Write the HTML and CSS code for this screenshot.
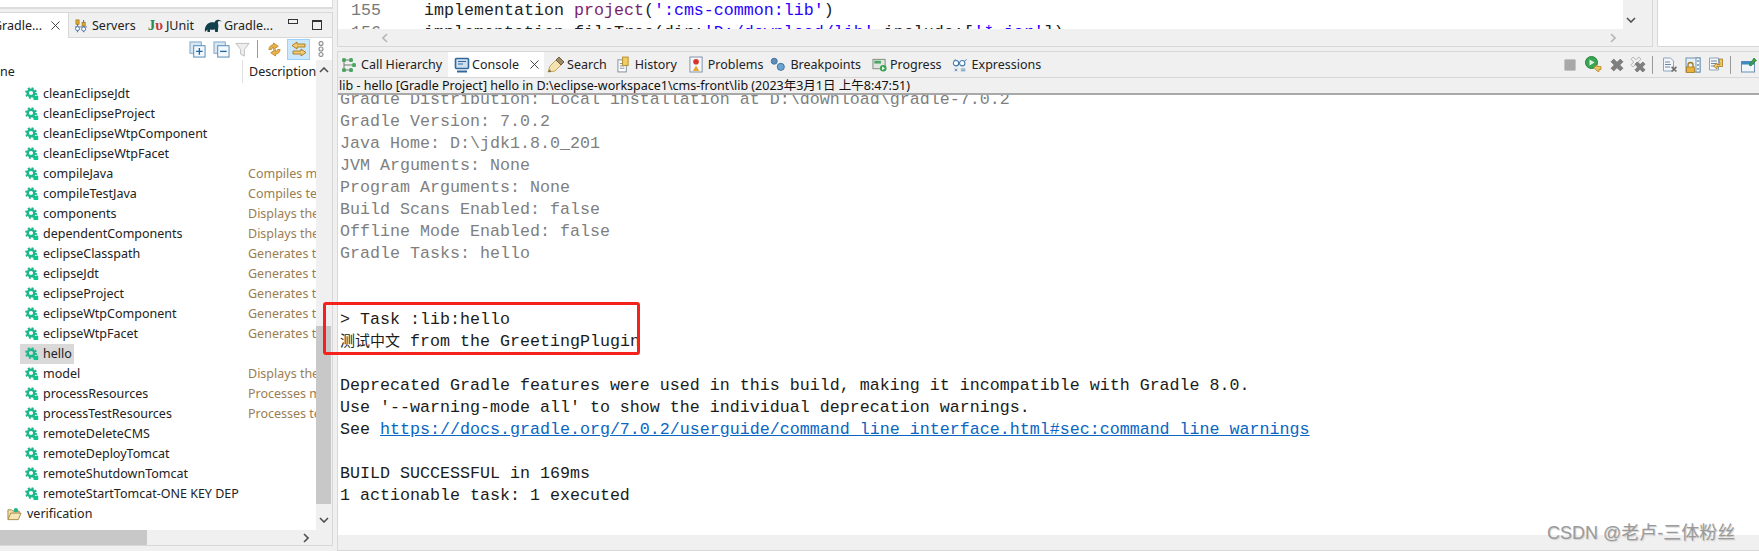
FILE: index.html
```html
<!DOCTYPE html>
<html lang="zh">
<head>
<meta charset="utf-8">
<title>Eclipse</title>
<link rel="stylesheet" href="styles.css">
</head>
<body>
<svg class="defs" width="0" height="0" aria-hidden="true">
  <defs>
    <symbol id="gear" viewBox="0 0 14 14">
      <circle cx="6" cy="6" r="5" fill="none" stroke="#1fb58b" stroke-width="1.8" stroke-dasharray="2 1.93"/>
      <circle cx="6" cy="6" r="3.3" fill="none" stroke="#1fb58b" stroke-width="2.4"/>
      <rect x="8.6" y="9" width="4.6" height="4" fill="#0fc48a"/>
      <path d="M9.6 9V8.2a1.2 1.2 0 0 1 2.4 0V9" fill="none" stroke="#0fc48a" stroke-width=".8"/>
    </symbol>
    <symbol id="i-close" viewBox="0 0 10 10">
      <path d="M.5.5l9 9M9.500.5l-9 9" fill="none" stroke="#333" stroke-width="1"/>
    </symbol>
    <symbol id="i-servers" viewBox="0 0 16 16">
      <path d="M4 1v14M11 1v14" stroke="#59708c" stroke-width="1.2"/>
      <path d="M1 9h14" stroke="#7a8ba0" stroke-width="1.2"/>
      <rect x="2.2" y="1" width="3.6" height="5" fill="#e4a82e" stroke="#8a6a20" stroke-width=".7"/>
      <rect x="9.2" y="4" width="3.6" height="4" fill="#e4a82e" stroke="#8a6a20" stroke-width=".7"/>
      <circle cx="4" cy="11" r="2.3" fill="#fff" stroke="#3d6aa5" stroke-width="1"/>
      <circle cx="11" cy="11.5" r="2.3" fill="#fff" stroke="#3d6aa5" stroke-width="1"/>
    </symbol>
    <symbol id="i-elephant" viewBox="0 0 18 14">
      <path d="M1 13c-.6-3 .2-6 2.4-8C5.400 3.200 8 2.800 10.400 3.500c.6-1.500 2-2.700 3.600-2.800 1.800-.1 3.200 1 3.800 2.300-.8-.7-1.900-1.200-3-.8-.9.300-1.100 1.100-.8 2 .5 1.600.5 3.200.2 4.800l-.4 4h-2.600l-.4-2.800c-1.600.8-3.300.8-4.800.2L6 13H3.500l-.2-2.600C2.600 11.200 2 12.200 1 13z" fill="#123f4c"/>
    </symbol>
    <symbol id="i-expand" viewBox="0 0 18 18">
      <rect x="1" y="1" width="12" height="12" fill="#d7e6f3" stroke="#7ea4c6"/>
      <rect x="5" y="5" width="12" height="12" fill="#f3f8fc" stroke="#4d87b5"/>
      <path d="M11 7.500v7M7.500 11h7" stroke="#22689f" stroke-width="1.400"/>
    </symbol>
    <symbol id="i-collapse" viewBox="0 0 18 18">
      <rect x="1" y="1" width="12" height="12" fill="#d7e6f3" stroke="#7ea4c6"/>
      <rect x="5" y="5" width="12" height="12" fill="#f3f8fc" stroke="#4d87b5"/>
      <path d="M7.500 11h7" stroke="#22689f" stroke-width="1.400"/>
    </symbol>
    <symbol id="i-filter" viewBox="0 0 16 16">
      <path d="M1 1.500h14L10 8v7l-4-2V8z" fill="#eeeeee" stroke="#bdbdbd"/>
    </symbol>
    <symbol id="i-refresh" viewBox="0 0 16 16">
      <path d="M2 8c.2-3 2.400-5 5-5V1l5 3.500L7 8V6c-1.300 0-2 .8-2.300 2z" fill="#e9b44c" stroke="#b27a1c" stroke-width=".8"/>
      <path d="M14 8c-.2 3-2.400 5-5 5v2L4 11.500 9 8v2c1.300 0 2-.8 2.300-2z" fill="#e9b44c" stroke="#b27a1c" stroke-width=".8"/>
    </symbol>
    <symbol id="i-link" viewBox="0 0 16 16">
      <path d="M6 1 1 4.500 6 8V6h8V3H6z" fill="#f0cb72" stroke="#a9761a" stroke-width=".9"/>
      <path d="M10 8l5 3.500-5 3.500v-2H2v-3h8z" fill="#f0cb72" stroke="#a9761a" stroke-width=".9"/>
    </symbol>
    <symbol id="i-dots" viewBox="0 0 8 16">
      <g fill="#f5f5f5" stroke="#8d8d8d" stroke-width="1.100"><circle cx="4" cy="2.500" r="2"/><circle cx="4" cy="8" r="2"/><circle cx="4" cy="13.500" r="2"/></g>
    </symbol>
    <symbol id="i-call" viewBox="0 0 16 16">
      <path d="M3 3v10M3 3h5M3 8h8M3 13h5" fill="none" stroke="#6d7f6d" stroke-width="1"/>
      <g fill="#4ca663"><rect x="1" y="1" width="4" height="4" rx="1.500"/><rect x="1" y="11" width="4" height="4" rx="1.500"/><rect x="8" y="1" width="4" height="4" rx="1.500"/><rect x="8" y="11" width="4" height="4" rx="1.500"/><rect x="11" y="6" width="4" height="4" rx="1.500"/></g>
    </symbol>
    <symbol id="i-console" viewBox="0 0 16 16">
      <rect x="1.500" y="1.500" width="13" height="10" rx="1" fill="#cfe0ef" stroke="#33689c" stroke-width="1.600"/>
      <path d="M4 4.500h8M4 7h5" stroke="#33689c"/>
      <path d="M3 14.500h10" stroke="#33689c" stroke-width="2"/>
    </symbol>
    <symbol id="i-search" viewBox="0 0 18 18">
      <path d="M1 16l2-6 6-6 5 5-6 6z" fill="#f4e3b0" stroke="#c9a657"/>
      <path d="M9 4l3-3 5 5-3 3z" fill="#9b8a6a" stroke="#6d5c3e"/>
      <path d="M1 16l2-3 1 3z" fill="#7a6a4a"/>
    </symbol>
    <symbol id="i-history" viewBox="0 0 14 18">
      <rect x="1" y="4" width="9" height="13" fill="#fff" stroke="#7b8a9a"/>
      <path d="M3 8h5M3 10.500h5M3 13h5" stroke="#7b8a9a"/>
      <rect x="6" y="1" width="6" height="9" fill="#f1cd63" stroke="#b18c2a"/>
    </symbol>
    <symbol id="i-problems" viewBox="0 0 16 18">
      <rect x="1" y="1" width="13" height="16" fill="#f5f8fb" stroke="#7d8fa5"/>
      <circle cx="7.500" cy="6" r="3" fill="#d9342b"/>
      <path d="M7.500 10l3.500 6H4z" fill="#e9a92e"/>
    </symbol>
    <symbol id="i-breakpoints" viewBox="0 0 16 16">
      <circle cx="4.500" cy="4.500" r="3.200" fill="#5b8fb9" stroke="#3f6f97"/>
      <circle cx="11.500" cy="10.500" r="3.800" fill="#6ba3d0" stroke="#3f6f97"/>
    </symbol>
    <symbol id="i-progress" viewBox="0 0 16 16">
      <rect x="1" y="2.500" width="13" height="10" fill="#dfe6df" stroke="#7c8a7c"/>
      <rect x="2.500" y="4" width="7" height="3" fill="#4ca663"/>
      <circle cx="12" cy="12" r="3.500" fill="#39a24f"/>
      <path d="M10.800 10v4l3-2z" fill="#fff"/>
    </symbol>
    <symbol id="i-expr" viewBox="0 0 18 16">
      <circle cx="4.500" cy="6" r="3" fill="#fff" stroke="#3f79ad" stroke-width="1.200"/>
      <circle cx="11.500" cy="6" r="3" fill="#fff" stroke="#3f79ad" stroke-width="1.200"/>
      <path d="M7.500 5.500h1M14 4l2.500-2.500M2 3.500 4 1.500" fill="none" stroke="#3f79ad"/>
      <path d="M3 12l3 3M6 12l-3 3M10 12.500h5M10 14.500h5" stroke="#3f79ad" stroke-width=".9"/>
    </symbol>
    <symbol id="i-stop" viewBox="0 0 12 12">
      <rect x=".5" y=".5" width="11" height="11" rx="1" fill="#a8a8a8" stroke="#c4c4c4"/>
    </symbol>
    <symbol id="i-run" viewBox="0 0 17 17">
      <circle cx="6.500" cy="6.500" r="6" fill="#3aa552" stroke="#23833a"/>
      <path d="M4.500 3.500v6l5-3z" fill="#e6f4e8"/>
      <path d="M9 11.500l3-2.500v1.500h4v3h-2v2l-2-.5z" fill="#edc56a" stroke="#b5841f" stroke-width=".8"/>
    </symbol>
    <symbol id="i-x" viewBox="1 1 12 12">
      <path d="M2 4.200 4.200 2 7 4.800 9.800 2 12 4.200 9.200 7 12 9.800 9.800 12 7 9.200 4.200 12 2 9.800 4.800 7z" fill="#7f7f7f" stroke="#6e6e6e" stroke-width=".8"/>
    </symbol>
    <symbol id="i-xx" viewBox="0 0 17 17">
      <path d="M1 3.200 3.200 1 6 3.800 8.800 1 11 3.200 8.200 6 11 8.800 8.800 11 6 8.200 3.200 11 1 8.800 3.800 6z" fill="#f0f0f0" stroke="#a3a3a3" stroke-width=".8"/>
      <path d="M5 8.200 7.200 6 10 8.800 12.800 6 15 8.200 12.200 11 15 13.800 12.800 16 10 13.200 7.200 16 5 13.800 7.800 11z" fill="#7f7f7f" stroke="#6e6e6e" stroke-width=".8"/>
    </symbol>
    <symbol id="i-docx" viewBox="0 0 16 16">
      <path d="M1.500 1h7l3 3v10h-10z" fill="#f3f7fb" stroke="#8ea4bb"/>
      <path d="M3 5h5M3 7.500h6M3 10h5" stroke="#6f88a3"/>
      <path d="M9 10.500 10.200 9.300 12 11l1.800-1.700 1.200 1.200-1.800 1.700 1.800 1.700L13.800 15 12 13.300 10.200 15 9 13.900l1.800-1.700z" fill="#6f6f6f"/>
    </symbol>
    <symbol id="i-lock" viewBox="0 0 16 16">
      <rect x="1" y="1" width="14" height="14" fill="#e5f1fa" stroke="#6e8fb0"/>
      <rect x="11" y="1" width="4" height="14" fill="#fff" stroke="#6e8fb0"/>
      <path d="M12.200 4h1.600M12.200 8h1.600M12.200 12h1.600" stroke="#3f79ad" stroke-width="1.500"/>
      <path d="M3 10V8a2.500 2.500 0 0 1 5 0v2" fill="none" stroke="#a07a20" stroke-width="1.300"/>
      <rect x="1.500" y="10" width="8" height="5.500" fill="#e9b03a" stroke="#9c751c" stroke-width=".7"/>
    </symbol>
    <symbol id="i-docarrow" viewBox="0 0 16 16">
      <path d="M1.500 1h9v12h-9z" fill="#f3f7fb" stroke="#8ea4bb"/>
      <path d="M3 4h6M3 6.500h5M3 9h4" stroke="#6f88a3"/>
      <path d="M11 2h3.500v7.500H9V12L5.500 9 9 6v1.500h3z" fill="#f0c96a" stroke="#a9761a" stroke-width=".8"/>
    </symbol>
    <symbol id="i-pin" viewBox="0 0 16 16">
      <rect x=".5" y="4.500" width="13" height="10.500" fill="#f1f6fb" stroke="#6b8fb3"/>
      <rect x=".5" y="4.500" width="13" height="3" fill="#3d8ac4"/>
      <path d="M8 8l3-4 2-3 2.500 2.500-2.500 2L10 9z" fill="#3fa34d" stroke="#24763a" stroke-width=".7"/>
    </symbol>
    <symbol id="i-folder" viewBox="0 0 16 14">
      <path d="M1 12.500V2.500h4l1.500 1.500H13v2" fill="#f3dfa8" stroke="#a88845"/>
      <path d="M1 13l3-7h11l-3 7z" fill="#f6e6b8" stroke="#a88845"/>
      <circle cx="9.500" cy="3" r="2.300" fill="#1fb58b"/>
    </symbol>
  </defs>
</svg>

<div class="app">
  <aside class="left">
    <div class="stub"></div>
    <section class="gradle">
      <div class="vtabs">
        <div class="vtab vtab-on"><span class="clip-g">Gradle...</span><svg class="close"><use href="#i-close"/></svg></div>
        <div class="vtab vt-servers"><svg class="ic14"><use href="#i-servers"/></svg>Servers</div>
        <div class="vtab vt-junit"><span class="ju"><b class="j">J</b><b class="u">υ</b></span>JUnit</div>
        <div class="vtab vt-gradle"><svg class="ic-el"><use href="#i-elephant"/></svg>Gradle...</div>
        <div class="winctl"><span class="min"></span><span class="max"></span></div>
      </div>
      <div class="vtools">
        <svg class="ic17"><use href="#i-expand"/></svg>
        <svg class="ic17 t-c"><use href="#i-collapse"/></svg>
        <svg class="ic15 t-f"><use href="#i-filter"/></svg>
        <span class="sep t-s"></span>
        <svg class="ic15 t-r"><use href="#i-refresh"/></svg>
        <span class="hl"><svg class="ic16"><use href="#i-link"/></svg></span>
        <svg class="ic-dots"><use href="#i-dots"/></svg>
      </div>
      <div class="body">
        <div class="tree-wrap">
          <div class="thead"><span class="th-name">ne</span><span class="th-desc">Description</span></div>
          <div class="tree">
            <div class="row"><span class="nm"><svg class="gear"><use href="#gear"/></svg>cleanEclipseJdt</span></div>
            <div class="row"><span class="nm"><svg class="gear"><use href="#gear"/></svg>cleanEclipseProject</span></div>
            <div class="row"><span class="nm"><svg class="gear"><use href="#gear"/></svg>cleanEclipseWtpComponent</span></div>
            <div class="row"><span class="nm"><svg class="gear"><use href="#gear"/></svg>cleanEclipseWtpFacet</span></div>
            <div class="row"><span class="nm"><svg class="gear"><use href="#gear"/></svg>compileJava</span><span class="ds">Compiles main Java source.</span></div>
            <div class="row"><span class="nm"><svg class="gear"><use href="#gear"/></svg>compileTestJava</span><span class="ds">Compiles test Java source.</span></div>
            <div class="row"><span class="nm"><svg class="gear"><use href="#gear"/></svg>components</span><span class="ds">Displays the components produced</span></div>
            <div class="row"><span class="nm"><svg class="gear"><use href="#gear"/></svg>dependentComponents</span><span class="ds">Displays the dependent components</span></div>
            <div class="row"><span class="nm"><svg class="gear"><use href="#gear"/></svg>eclipseClasspath</span><span class="ds">Generates the Eclipse classpath file.</span></div>
            <div class="row"><span class="nm"><svg class="gear"><use href="#gear"/></svg>eclipseJdt</span><span class="ds">Generates the Eclipse JDT settings.</span></div>
            <div class="row"><span class="nm"><svg class="gear"><use href="#gear"/></svg>eclipseProject</span><span class="ds">Generates the Eclipse project file.</span></div>
            <div class="row"><span class="nm"><svg class="gear"><use href="#gear"/></svg>eclipseWtpComponent</span><span class="ds">Generates the Eclipse WTP component.</span></div>
            <div class="row"><span class="nm"><svg class="gear"><use href="#gear"/></svg>eclipseWtpFacet</span><span class="ds">Generates the Eclipse WTP facet.</span></div>
            <div class="row"><span class="nm sel"><svg class="gear"><use href="#gear"/></svg>hello</span></div>
            <div class="row"><span class="nm"><svg class="gear"><use href="#gear"/></svg>model</span><span class="ds">Displays the configuration model</span></div>
            <div class="row"><span class="nm"><svg class="gear"><use href="#gear"/></svg>processResources</span><span class="ds">Processes main resources.</span></div>
            <div class="row"><span class="nm"><svg class="gear"><use href="#gear"/></svg>processTestResources</span><span class="ds">Processes test resources.</span></div>
            <div class="row"><span class="nm"><svg class="gear"><use href="#gear"/></svg>remoteDeleteCMS</span></div>
            <div class="row"><span class="nm"><svg class="gear"><use href="#gear"/></svg>remoteDeployTomcat</span></div>
            <div class="row"><span class="nm"><svg class="gear"><use href="#gear"/></svg>remoteShutdownTomcat</span></div>
            <div class="row"><span class="nm"><svg class="gear"><use href="#gear"/></svg>remoteStartTomcat-ONE KEY DEP</span></div>
            <div class="row"><span class="nm nm-top"><svg class="folder"><use href="#i-folder"/></svg>verification</span></div>
          </div>
        </div>
        <div class="vscroll">
          <svg class="chev" viewBox="0 0 10 6"><path d="M1 5l4-4 4 4" fill="none" stroke="#505050" stroke-width="1.600"/></svg>
          <div class="vtrack"><div class="vthumb"></div></div>
          <svg class="chev" viewBox="0 0 10 6"><path d="M1 1l4 4 4-4" fill="none" stroke="#505050" stroke-width="1.600"/></svg>
        </div>
      </div>
      <div class="hscroll">
        <div class="hthumb"></div>
        <svg class="chev-r" viewBox="0 0 6 10"><path d="M1 1l4 4-4 4" fill="none" stroke="#505050" stroke-width="1.600"/></svg>
      </div>
    </section>
  </aside>

  <main class="right">
    <div class="upper">
      <section class="editor">
        <div class="code-row">
          <div class="ruler"><div>155</div><div>156</div></div>
          <pre class="code">    implementation <span class="kw">project</span>(<span class="str">':cms-common:lib'</span>)
    implementation fileTree(dir:<span class="str">'D:/download/lib'</span>,include:[<span class="str">'*.jar'</span>])</pre>
          <div class="ed-v"><svg class="chev" viewBox="0 0 10 6"><path d="M1 1l4 4 4-4" fill="none" stroke="#505050" stroke-width="1.600"/></svg></div>
        </div>
        <div class="ed-h">
          <svg class="chev-r flip" viewBox="0 0 6 10"><path d="M1 1l4 4-4 4" fill="none" stroke="#b5b5b5" stroke-width="1.600"/></svg>
          <svg class="chev-r" viewBox="0 0 6 10"><path d="M1 1l4 4-4 4" fill="none" stroke="#b5b5b5" stroke-width="1.600"/></svg>
        </div>
      </section>
      <section class="outline"></section>
    </div>

    <section class="consolepane">
      <div class="ctabs">
        <div class="ctab t-call"><svg class="ic16"><use href="#i-call"/></svg>Call Hierarchy</div>
        <div class="ctab ctab-on"><svg class="ic16"><use href="#i-console"/></svg>Console<svg class="close close-c"><use href="#i-close"/></svg></div>
        <div class="ctab t-search"><svg class="ic18"><use href="#i-search"/></svg>Search</div>
        <div class="ctab t-hist"><svg class="ic-h"><use href="#i-history"/></svg>History</div>
        <div class="ctab t-prob"><svg class="ic-p"><use href="#i-problems"/></svg>Problems</div>
        <div class="ctab t-bp"><svg class="ic15"><use href="#i-breakpoints"/></svg>Breakpoints</div>
        <div class="ctab t-prog"><svg class="ic15"><use href="#i-progress"/></svg>Progress</div>
        <div class="ctab t-exp"><svg class="ic16"><use href="#i-expr"/></svg>Expressions</div>
        <div class="ctools">
          <svg class="ic12"><use href="#i-stop"/></svg>
          <svg class="ic17 m-run"><use href="#i-run"/></svg>
          <svg class="ic14 m-x"><use href="#i-x"/></svg>
          <svg class="ic17 m-xx"><use href="#i-xx"/></svg>
          <span class="sep m-s1"></span>
          <svg class="ic16 m-doc"><use href="#i-docx"/></svg>
          <svg class="ic16 m-lock"><use href="#i-lock"/></svg>
          <svg class="ic16 m-lock"><use href="#i-docarrow"/></svg>
          <span class="sep m-s2"></span>
          <svg class="ic16 m-pin"><use href="#i-pin"/></svg>
        </div>
      </div>
      <div class="cstatus">lib - hello [Gradle Project] hello in D:\eclipse-workspace1\cms-front\lib (2023年3月1日 上午8:47:51)</div>
      <div class="coutput">
<pre class="out"><span class="gray">Gradle Distribution: Local installation at D:\download\gradle-7.0.2
Gradle Version: 7.0.2
Java Home: D:\jdk1.8.0_201
JVM Arguments: None
Program Arguments: None
Build Scans Enabled: false
Offline Mode Enabled: false
Gradle Tasks: hello</span>


&gt; Task :lib:hello
<span class="cjk">测试中文</span> from the GreetingPlugin

Deprecated Gradle features were used in this build, making it incompatible with Gradle 8.0.
Use '--warning-mode all' to show the individual deprecation warnings.
See <a class="lnk">https://docs.gradle.org/7.0.2/userguide/command_line_interface.html#sec:command_line_warnings</a>

BUILD SUCCESSFUL in 169ms
1 actionable task: 1 executed</pre>
      </div>
      <div class="cbottom"></div>
    </section>
  </main>

  <div class="redbox"></div>
  <div class="mark">CSDN @老卢-三体粉丝</div>
</div>
</body>
</html>
```
FILE: styles.css
```css
* { box-sizing: border-box; }
html, body { margin: 0; padding: 0; background: #f0f0f0; }
.defs { position: absolute; }
svg { display: block; flex: none; }

.app {
  position: relative;
  width: 1759px;
  height: 551px;
  display: flex;
  overflow: hidden;
  background: #f0f0f0;
  font-family: "Noto Sans", "Noto Sans CJK SC", sans-serif;
  font-size: 12.5px;
  color: #222;
}

/* left column */
.left { width: 333px; flex: none; display: flex; flex-direction: column; }
.stub { height: 9px; background: #fff; border-bottom: 2px solid #dcdcdc; border-right: 1px solid #dcdcdc; }
.gradle {
  margin-top: 3px;
  height: 534px;
  display: flex;
  flex-direction: column;
  border-top: 1px solid #d8d8d8;
  border-right: 1px solid #d8d8d8;
  border-bottom: 1px solid #d8d8d8;
}
.vtabs { height: 25px; flex: none; display: flex; align-items: center; border-bottom: 1px solid #d8d8d8; }
.vtab { display: flex; align-items: center; height: 100%; gap: 4px; white-space: nowrap; padding-top: 1px; }
.vtab-on {
  width: 69px;
  height: 25px;
  background: #fff;
  border-right: 1px solid #d8d8d8;
  overflow: hidden;
  justify-content: flex-end;
  padding-right: 8px;
  gap: 9px;
}
.clip-g { flex: none; }
.close { width: 9px; height: 9px; }
.vt-servers { margin-left: 5px; }
.vt-junit { margin-left: 12px; gap: 3px; }
.vt-gradle { margin-left: 10px; gap: 2px; }
.ju { font: bold 15px/1 "Liberation Serif", serif; display: flex; }
.j { color: #2a8a55; }
.u { color: #c33a3a; }
.ic-el { width: 18px; height: 14px; }
.winctl { margin-left: auto; display: flex; align-items: center; gap: 14px; padding-right: 10px; }
.min { width: 10px; height: 5px; border: 1px solid #333; margin-top: -7px; }
.max { width: 10px; height: 10px; border: 1px solid #333; border-top-width: 2px; }

.vtools {
  height: 22px;
  flex: none;
  background: #fff;
  display: flex;
  align-items: center;
  padding-left: 189px;
}
.ic12 { width: 12px; height: 12px; }
.ic14 { width: 14px; height: 14px; }
.ic15 { width: 15px; height: 15px; }
.ic16 { width: 16px; height: 16px; }
.ic17 { width: 17px; height: 17px; }
.ic18 { width: 18px; height: 18px; }
.ic-h { width: 13px; height: 17px; }
.ic-p { width: 15px; height: 17px; }
.ic-dots { width: 8px; height: 16px; margin-left: 7px; }
.t-c { margin-left: 7px; }
.t-f { margin-left: 5px; }
.t-s { margin-left: 7px; }
.t-r { margin-left: 9px; }
.sep { width: 1px; height: 18px; background: #9a9a9a; flex: none; }
.hl {
  width: 23px;
  height: 21px;
  margin-left: 5px;
  background: #cce8ff;
  border: 1px solid #99d1ff;
  display: flex;
  align-items: center;
  justify-content: center;
}

.body { flex: 1; min-height: 0; display: flex; background: #fff; }
.tree-wrap { width: 316px; flex: none; overflow: hidden; }
.thead { height: 24px; display: flex; align-items: center; padding-bottom: 1px; }
.th-name { width: 242px; flex: none; }
.th-desc { border-left: 1px solid #e0e0e0; height: 100%; padding-left: 6px; display: flex; align-items: center; }
.row { height: 20px; white-space: nowrap; display: grid; grid-template-columns: 248px 1fr; justify-items: start; align-items: center; }
.nm {
  height: 20px;
  margin-left: 20px;
  padding: 0 2px 1px 5px;
  display: flex;
  align-items: center;
  gap: 5px;
}
.ds { color: #9a7d52; overflow: hidden; padding-bottom: 1px; }
.nm-top { margin-left: 7px; padding: 0 0 1px; gap: 5px; }
.sel { background: #d9d9d9; }
.gear { width: 14px; height: 14px; margin-right: -1px; }
.folder { width: 15px; height: 14px; }

.vscroll { width: 16px; flex: none; background: #f0f0f0; display: flex; flex-direction: column; align-items: center; padding-top: 7px; padding-bottom: 7px; }
.chev { width: 10px; height: 6px; flex: none; }
.vtrack { flex: 1; width: 100%; padding-top: 253px; padding-bottom: 13px; display: flex; }
.vthumb { flex: 1; background: #c8c8c8; margin-right: 1px; }
.hscroll { height: 15px; flex: none; display: flex; align-items: center; background: #f0f0f0; padding-right: 23px; justify-content: space-between; }
.hthumb { width: 147px; height: 15px; background: #c8c8c8; }
.chev-r { width: 6px; height: 10px; flex: none; }
.flip { transform: scaleX(-1); }

/* right column */
.right { flex: 1; min-width: 0; margin-left: 4px; display: flex; flex-direction: column; }
.upper { height: 47px; flex: none; display: flex; }
.editor { width: 1316px; flex: none; display: flex; flex-direction: column; border-left: 1px solid #d8d8d8; border-right: 1px solid #d8d8d8; border-bottom: 1px solid #d8d8d8; }
.code-row { height: 29px; flex: none; display: flex; overflow: hidden; background: #fff; font: 16.67px/22px "Liberation Mono", monospace; }
.ruler { width: 44px; flex: none; padding-left: 13px; color: #787878; }
.code { flex: 1; margin: 0 0 0 2px; font: inherit; color: #222; overflow: hidden; }
.kw { color: #7a1e6c; }
.str { color: #2a00ff; }
.ed-v { width: 29px; flex: none; background: #f0f0f0; padding: 17px 0 0 3px; }
.ed-h { flex: 1; display: flex; align-items: center; justify-content: space-between; padding: 0 36px 0 44px; background: #f0f0f0; }
.outline { width: 102px; margin-left: 4px; background: #fff; border-left: 1px solid #d8d8d8; border-bottom: 1px solid #d8d8d8; }

.consolepane { flex: 1; min-height: 0; margin-top: 4px; display: flex; flex-direction: column; border-left: 1px solid #d8d8d8; }
.ctabs { height: 27px; flex: none; display: flex; align-items: center; border-top: 1px solid #d8d8d8; border-bottom: 1px solid #d8d8d8; white-space: nowrap; padding-left: 3px; }
.ctab { display: flex; align-items: center; height: 100%; gap: 4px; }
.ctab-on { width: 96px; margin-left: 6px; padding-left: 6px; gap: 2px; background: #fff; }
.close-c { margin-left: 9px; }
.t-search { margin-left: 3px; gap: 2px; }
.t-hist { margin-left: 10px; gap: 5px; }
.t-prob { margin-left: 12px; gap: 4px; }
.t-bp { margin-left: 7px; gap: 5px; }
.t-prog { margin-left: 11px; gap: 3px; }
.t-exp { margin-left: 10px; gap: 4px; }
.ctools { margin-left: auto; display: flex; align-items: center; padding-right: 2px; }
.m-run { margin-left: 9px; }
.m-x { margin-left: 8px; }
.m-xx { margin-left: 6px; }
.m-s1 { margin-left: 5px; }
.m-doc { margin-left: 9px; }
.m-lock { margin-left: 7px; }
.m-s2 { margin-left: 6px; }
.m-pin { margin-left: 10px; }

.cstatus { height: 17px; flex: none; line-height: 16px; border-bottom: 2px solid #a8a8a8; padding-left: 1px; white-space: nowrap; font-size: 12.5px; color: #111; }
.coutput { flex: 1; min-height: 0; overflow: hidden; background: #fff; }
.out { margin: -6px 0 0; padding-left: 2px; font: 16.67px/22px "Liberation Mono", "Noto Sans CJK SC", monospace; color: #1c1c1c; }
.gray { color: #7f7f7f; }
.cjk { font: 15px/0 "Noto Sans CJK SC", sans-serif; }
.lnk { color: #0b66c3; text-decoration: underline; }
.cbottom { height: 16px; flex: none; border-bottom: 1px solid #d8d8d8; background: #f0f0f0; }

/* overlays */
.redbox {
  position: absolute;
  left: 323px;
  top: 302px;
  width: 317px;
  height: 53px;
  border: 3px solid #f5211c;
  border-radius: 3px;
}
.mark {
  position: absolute;
  left: 1547px;
  top: 521px;
  font: 18px/24px "Liberation Sans", "Noto Sans CJK SC", sans-serif;
  color: #9a9a9a;
  text-shadow: 1px 1px 1px #d0d0d0;
  white-space: nowrap;
}
```
